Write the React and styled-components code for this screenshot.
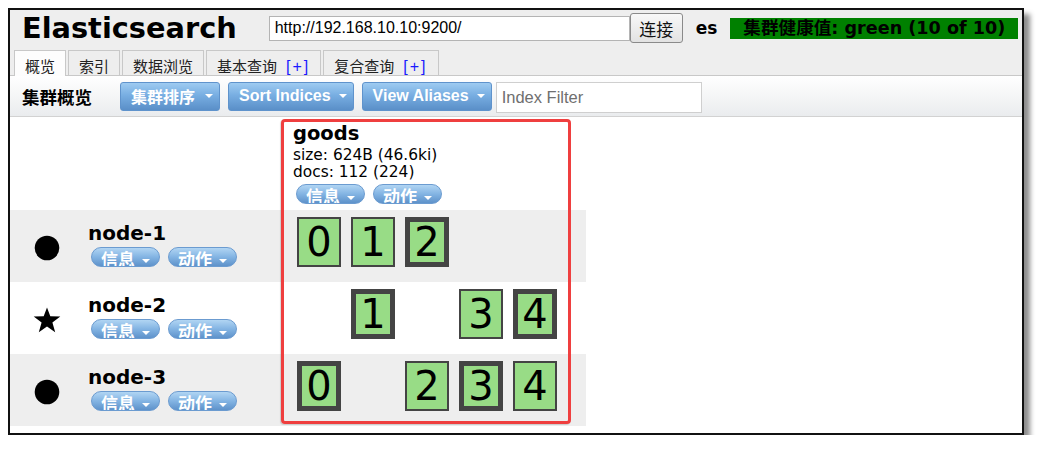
import React from "react";
import styled, { createGlobalStyle } from "styled-components";

const GlobalStyle = createGlobalStyle`
  html, body {
    margin: 0;
    padding: 0;
    background: #ffffff;
  }
  body {
    font-family: "DejaVu Sans", "Noto Sans CJK SC", sans-serif;
    color: #000;
  }
`;

const CJK = `"Noto Sans CJK SC", "DejaVu Sans", sans-serif`;
const VERDANA = `"DejaVu Sans", "Noto Sans CJK SC", sans-serif`;
const ARIAL = `"Liberation Sans", "Noto Sans CJK SC", sans-serif`;

const Frame = styled.div`
  box-sizing: border-box;
  margin: 8px 0 0 8px;
  width: 1016px;
  height: 427px;
  border: 2px solid #111;
  background: #fff;
  box-shadow: 6px 6px 5px rgba(0, 0, 0, 0.45);
  overflow: hidden;
  display: flex;
  flex-direction: column;
`;

const Header = styled.header`
  background: #eeeeee;
  display: flex;
  flex-direction: column;
`;

const HeaderTop = styled.div`
  height: 36px;
  display: flex;
  align-items: center;
  padding-left: 12px;
`;

const Title = styled.h1`
  margin: 0;
  font-family: ${VERDANA};
  font-size: 28.8px;
  font-weight: bold;
  line-height: 33px;
  color: #000;
`;

const UrlInput = styled.input`
  box-sizing: border-box;
  margin-left: 32px;
  width: 361px;
  height: 25px;
  border: 1px solid #b4b4b4;
  padding: 0 5px;
  font-family: ${ARIAL};
  font-size: 16px;
  color: #000;
  background: #fff;
  outline: none;
`;

const ConnectButton = styled.button`
  box-sizing: border-box;
  width: 53px;
  height: 30px;
  border: 1px solid #8a8a8a;
  border-radius: 3px;
  background: linear-gradient(#f8f8f8, #e2e2e2);
  font-family: ${CJK};
  font-size: 17px;
  color: #111;
  padding: 0;
`;

const ClusterName = styled.span`
  margin-left: 13px;
  font-family: ${VERDANA};
  font-weight: bold;
  font-size: 17px;
`;

const HealthBadge = styled.span`
  margin-left: 13px;
  height: 21px;
  line-height: 21px;
  padding: 0 13px 0 13px;
  background: #008000;
  color: #000;
  font-family: ${VERDANA};
  font-weight: bold;
  font-size: 17.6px;
  white-space: nowrap;
`;

const TabBar = styled.nav`
  margin-top: 4px;
  padding-left: 4px;
  display: flex;
  gap: 2px;
  height: 25px;
`;

const Tab = styled.div`
  box-sizing: border-box;
  height: ${(p) => (p.$active ? "26px" : "25px")};
  padding: 6px 10px 0;
  border: 1px solid #c8c8c8;
  border-bottom: none;
  background: ${(p) => (p.$active ? "#fdfdfd" : "#eeeeee")};
  font-family: ${CJK};
  font-size: 15px;
  line-height: 18px;
  color: #222;
  white-space: nowrap;
  position: relative;
  z-index: ${(p) => (p.$active ? 2 : 0)};
`;

const Plus = styled.span`
  margin-left: 9px;
  font-family: ${ARIAL};
  font-size: 16px;
  letter-spacing: 2px;
  color: #1a1aff;
`;

const Toolbar = styled.div`
  height: 40px;
  border-top: 1px solid #c8c8c8;
  border-bottom: 1px solid #d2d2d2;
  background: linear-gradient(#ffffff, #eaecee);
  display: flex;
  align-items: center;
  padding-left: 12px;
`;

const ToolbarLabel = styled.span`
  font-family: ${CJK};
  font-weight: bold;
  font-size: 17.5px;
  margin-right: 28px;
`;

const MenuButton = styled.button`
  box-sizing: border-box;
  height: 29px;
  margin-right: ${(p) => p.$gap ?? 8}px;
  display: flex;
  align-items: center;
  padding: 0 6px 0 10px;
  border: 1px solid #5f93cc;
  border-radius: 3px;
  background: linear-gradient(#9ecbf1, #78aee2 45%, #5a8fc8);
  color: #fff;
  font-family: ${(p) => (p.$cjk ? CJK : ARIAL)};
  font-weight: bold;
  font-size: 16px;
  white-space: nowrap;
`;

const Caret = styled.span`
  display: inline-block;
  margin-left: ${(p) => p.$gap ?? 8}px;
  width: 0;
  height: 0;
  border-left: 4px solid transparent;
  border-right: 4px solid transparent;
  border-top: 4px solid #fff;
`;

const FilterInput = styled.input`
  box-sizing: border-box;
  width: 206px;
  height: 31px;
  margin-top: 2px;
  border: 1px solid #cfcfcf;
  padding: 0 5px;
  font-family: ${ARIAL};
  font-size: 16.5px;
  background: #fff;
  outline: none;
  &::placeholder {
    color: #6f6f6f;
  }
`;

const Main = styled.main`
  position: relative;
  flex: 1;
`;

const Row = styled.div`
  display: flex;
  width: 576px;
  height: ${(p) => p.$height}px;
  background: ${(p) => (p.$shaded ? "#eeeeee" : "#ffffff")};
`;

const NodeCell = styled.div`
  flex: 0 0 273px;
  display: flex;
`;

const IconCell = styled.div`
  width: 74px;
  padding-top: 25px;
  display: flex;
  justify-content: center;
  align-items: flex-start;
`;

const NodeInfo = styled.div`
  margin-left: 4px;
  padding-top: 11px;
`;

const NodeName = styled.div`
  font-family: ${VERDANA};
  font-weight: bold;
  font-size: 20px;
  line-height: 24px;
  margin-bottom: 2px;
`;

const IndexCell = styled.div`
  box-sizing: border-box;
  flex: 0 0 303px;
  padding-left: 10px;
`;

const IndexHeader = styled.div`
  padding-top: 4px;
`;

const IndexName = styled.div`
  font-family: ${VERDANA};
  font-weight: bold;
  font-size: 19.5px;
  line-height: 26px;
`;

const IndexStat = styled.div`
  font-family: ${VERDANA};
  font-size: 15.4px;
  line-height: 17px;
`;

const PillGroup = styled.div`
  display: flex;
  gap: 8px;
  margin-left: 3px;
  margin-top: ${(p) => p.$top ?? 0}px;
`;

const Pill = styled.div`
  box-sizing: border-box;
  width: 69px;
  height: 20px;
  padding: 1px 0 0 9px;
  border: 1px solid #6b9bd0;
  border-radius: 10px;
  background: linear-gradient(#b1d5f3, #83b4e3 50%, #5e92ca);
  display: flex;
  align-items: flex-start;
  overflow: hidden;
  color: #fff;
  font-family: ${CJK};
  font-weight: bold;
  font-size: 17px;
`;

const PillText = styled.span`
  line-height: 20px;
`;

const PillCaret = styled(Caret)`
  margin-top: 10px;
  margin-left: 7px;
`;

const ShardRow = styled.div`
  display: flex;
  gap: 10px;
  margin-left: 4px;
  padding-top: 7px;
`;

const ShardSlot = styled.div`
  width: 44px;
  height: 50px;
`;

const Shard = styled(ShardSlot)`
  box-sizing: border-box;
  border: ${(p) => (p.$primary ? "5px" : "2px")} solid #444;
  background: #98dc86;
  display: flex;
  align-items: center;
  justify-content: center;
  font-family: ${VERDANA};
  font-size: 40px;
  line-height: 40px;
  color: #000;
`;

const Highlight = styled.div`
  position: absolute;
  left: 271px;
  top: 2px;
  width: 290px;
  height: 305px;
  box-sizing: border-box;
  border: 3px solid #ef3f3f;
  border-radius: 4px;
  pointer-events: none;
  box-shadow: -1px 1px 1px rgba(0, 0, 0, 0.15);
`;

const MasterStar = () => (
  <svg width="28" height="26" viewBox="0 0 28 26" aria-hidden="true">
    <polygon
      points="14,0.5 17.3,9.3 27.3,9.6 19.4,15.6 22.2,25.3 14,19.6 5.8,25.3 8.6,15.6 0.7,9.6 10.7,9.3"
      fill="#000"
    />
  </svg>
);

const NodeDot = () => (
  <svg width="28" height="26" viewBox="0 0 28 26" aria-hidden="true">
    <circle cx="14" cy="13" r="12.3" fill="#000" />
  </svg>
);

const ActionPills = ({ top }) => (
  <PillGroup $top={top}>
    <Pill>
      <PillText>信息</PillText>
      <PillCaret />
    </Pill>
    <Pill>
      <PillText>动作</PillText>
      <PillCaret />
    </Pill>
  </PillGroup>
);

const nodes = [
  { name: "node-1", master: false, shards: [[0, false], [1, false], [2, true], null, null] },
  { name: "node-2", master: true, shards: [null, [1, true], null, [3, false], [4, true]] },
  { name: "node-3", master: false, shards: [[0, true], null, [2, false], [3, true], [4, false]] },
];

const tabs = [
  { label: "概览", active: true },
  { label: "索引" },
  { label: "数据浏览" },
  { label: "基本查询", plus: true },
  { label: "复合查询", plus: true },
];

export default function App() {
  return (
    <>
      <GlobalStyle />
      <Frame>
        <Header>
          <HeaderTop>
            <Title>Elasticsearch</Title>
            <UrlInput defaultValue="http://192.168.10.10:9200/" />
            <ConnectButton>连接</ConnectButton>
            <ClusterName>es</ClusterName>
            <HealthBadge>集群健康值: green (10 of 10)</HealthBadge>
          </HeaderTop>
          <TabBar>
            {tabs.map((t) => (
              <Tab key={t.label} $active={t.active}>
                {t.label}
                {t.plus && <Plus>[+]</Plus>}
              </Tab>
            ))}
          </TabBar>
        </Header>

        <Toolbar>
          <ToolbarLabel>集群概览</ToolbarLabel>
          <MenuButton $cjk>
            集群排序
            <Caret $gap={10} />
          </MenuButton>
          <MenuButton>
            Sort Indices
            <Caret />
          </MenuButton>
          <MenuButton $gap={4}>
            View Aliases
            <Caret />
          </MenuButton>
          <FilterInput placeholder="Index Filter" />
        </Toolbar>

        <Main>
          <Row $height={93}>
            <NodeCell />
            <IndexCell>
              <IndexHeader>
                <IndexName>goods</IndexName>
                <IndexStat>size: 624B (46.6ki)</IndexStat>
                <IndexStat>docs: 112 (224)</IndexStat>
                <ActionPills top={3} />
              </IndexHeader>
            </IndexCell>
          </Row>

          {nodes.map((n, i) => (
            <Row key={n.name} $height={72} $shaded={i % 2 === 0}>
              <NodeCell>
                <IconCell>{n.master ? <MasterStar /> : <NodeDot />}</IconCell>
                <NodeInfo>
                  <NodeName>{n.name}</NodeName>
                  <ActionPills />
                </NodeInfo>
              </NodeCell>
              <IndexCell>
                <ShardRow>
                  {n.shards.map((s, k) =>
                    s ? (
                      <Shard key={k} $primary={s[1]}>
                        {s[0]}
                      </Shard>
                    ) : (
                      <ShardSlot key={k} />
                    )
                  )}
                </ShardRow>
              </IndexCell>
            </Row>
          ))}

          <Highlight />
        </Main>
      </Frame>
    </>
  );
}
